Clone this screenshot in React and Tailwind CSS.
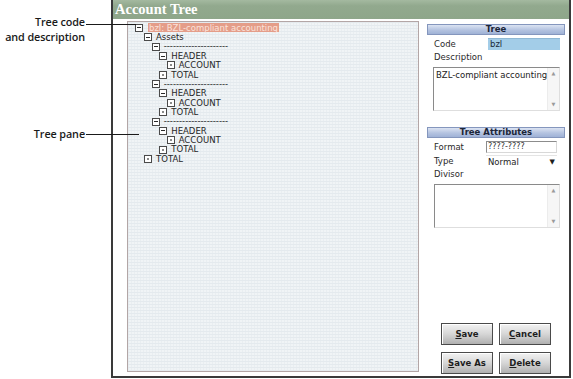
import React from "react";

const rows = [
  { lvl: 0, label: "bzl: BZL-compliant accounting", kind: "minus", hl: true },
  { lvl: 1, label: "Assets", kind: "minus" },
  { lvl: 2, label: "---------------------", kind: "minus" },
  { lvl: 3, label: "HEADER", kind: "minus" },
  { lvl: 4, label: "ACCOUNT", kind: "leaf" },
  { lvl: 3, label: "TOTAL", kind: "leaf" },
  { lvl: 2, label: "---------------------", kind: "minus" },
  { lvl: 3, label: "HEADER", kind: "minus" },
  { lvl: 4, label: "ACCOUNT", kind: "leaf" },
  { lvl: 3, label: "TOTAL", kind: "leaf" },
  { lvl: 2, label: "---------------------", kind: "minus" },
  { lvl: 3, label: "HEADER", kind: "minus" },
  { lvl: 4, label: "ACCOUNT", kind: "leaf" },
  { lvl: 3, label: "TOTAL", kind: "leaf" },
  { lvl: 1, label: "TOTAL", kind: "leaf" },
];

const indent = ["pl-[7px]", "pl-[16px]", "pl-[23.7px]", "pl-[31.3px]", "pl-[38.7px]"];

function Box({ kind }) {
  return (
    <div className="w-[8px] h-[8px] shrink-0 border border-[#4a4a4a] bg-white flex items-center justify-center">
      {kind === "minus" ? (
        <div className="w-[4px] h-[1px] bg-[#2a2a2a]" />
      ) : (
        <div className="w-[2px] h-[2px] bg-[#8a8a8a]" />
      )}
    </div>
  );
}

function Header({ children }) {
  return (
    <div className="h-[11px] border border-[#8496bd] bg-[linear-gradient(180deg,#dbe3f2_0%,#b4c3e0_55%,#9fb2d6_100%)] flex items-center justify-center font-bold text-[8.5px] text-[#1c2638] leading-none">
      {children}
    </div>
  );
}

function ScrollArea({ text, cls }) {
  return (
    <div className={"h-[44px] flex border border-t-[#8a8a8a] border-l-[#8a8a8a] border-r-[#dedede] border-b-[#dedede] bg-white " + cls}>
      <div className="flex-1 min-w-0 pl-[2px] pt-[2px] text-[8.5px] leading-[11px] text-[#222] whitespace-nowrap overflow-hidden">{text}</div>
      <div className="w-[12px] shrink-0 border-l border-[#ececec] bg-[#f6f6f6] flex flex-col items-center justify-between py-[3px] text-[5px] leading-none text-[#9a9a9a]">
        <span>▲</span>
        <span>▼</span>
      </div>
    </div>
  );
}

function Btn({ first, rest }) {
  return (
    <div className="w-[52px] h-[22px] border border-[#4a4a4a] bg-[linear-gradient(180deg,#f2f2f2_0%,#d6d6d6_50%,#b0b0b0_100%)] flex items-center justify-center text-[8.5px] font-bold text-[#1e1e1e] shadow-[inset_1px_1px_0_#ffffff]">
      <span className="underline">{first}</span>
      <span className="whitespace-pre">{rest}</span>
    </div>
  );
}

export default function App() {
  return (
    <div className="w-[573px] h-[379px] bg-white relative flex font-['DejaVu_Sans',sans-serif] overflow-hidden">
      <div className="w-[111px] shrink-0" />
      <div className="w-[460px] h-[378px] border-l-2 border-r-2 border-b-2 border-[#3a3a3a] flex flex-col">
        <div className="h-[19px] bg-[linear-gradient(180deg,#a4b9a0_0%,#92a98e_30%,#8ea68a_100%)] flex items-center pl-[2px] text-white font-['Liberation_Serif',serif] font-bold text-[14.5px] leading-none">
          Account Tree
        </div>
        <div className="flex pt-[2px]">
          <div className="ml-[14px] w-[292px] h-[351px] border border-[#b3a6a6] bg-[#f0f4f6] bg-[image:repeating-linear-gradient(0deg,#e4eaee_0px,#e4eaee_1px,transparent_1px,transparent_3px),repeating-linear-gradient(90deg,#e9eef1_0px,#e9eef1_1px,transparent_1px,transparent_3px)] pt-[1.3px] text-[8.5px] text-[#262626]">
            {rows.map((r, i) => (
              <div key={i} className={"h-[9.36px] flex items-center " + indent[r.lvl]}>
                <Box kind={r.kind} />
                {r.hl ? (
                  <span className="ml-[5px] px-[1px] h-[9px] flex items-center bg-[#e49d89] text-[#fbe2da] leading-none whitespace-nowrap">
                    {r.label}
                  </span>
                ) : (
                  <span className="ml-[4px] leading-none whitespace-nowrap">{r.label}</span>
                )}
              </div>
            ))}
          </div>
          <div className="ml-[8px] w-[138px] flex flex-col text-[8.5px] text-[#2a2a2a]">
            <div className="mt-[3px]">
              <Header>Tree</Header>
            </div>
            <div className="mt-[3px] h-[12px] flex items-center">
              <span className="w-[61px] pl-[7px]">Code</span>
              <div className="w-[72px] h-[12px] bg-[#a3cde8] border-t border-[#8fb8d4] pl-[2px] flex items-center text-[#1a2a3a]">bzl</div>
            </div>
            <div className="h-[10px] mt-[2px] pl-[7px] flex items-center">Description</div>
            <ScrollArea text="BZL-compliant accounting" cls="mt-[5px] ml-[6px] w-[127px]" />
            <div className="mt-[16px]">
              <Header>Tree Attributes</Header>
            </div>
            <div className="mt-[3px] h-[12px] flex items-center">
              <span className="w-[59px] pl-[7px]">Format</span>
              <div className="w-[71px] h-[12px] bg-white border border-t-[#8c8c8c] border-l-[#8c8c8c] border-r-[#d8d8d8] border-b-[#d8d8d8] pl-[1px] flex items-center text-[8px] text-[#333]">????-????</div>
            </div>
            <div className="mt-[2px] h-[13px] flex items-center">
              <span className="w-[59px] pl-[7px]">Type</span>
              <div className="w-[71px] h-[13px] bg-white border-t border-[#e4e4e4] pl-[2px] pr-[2px] flex items-center justify-between text-[#1e1e1e]">
                <span>Normal</span>
                <span className="text-[7px] leading-none">▼</span>
              </div>
            </div>
            <div className="h-[10px] mt-[1px] pl-[7px] flex items-center">Divisor</div>
            <ScrollArea text="" cls="mt-[5px] ml-[7px] w-[126px]" />
            <div className="mt-[95px] ml-[14px] flex gap-[6px]">
              <Btn first="S" rest="ave" />
              <Btn first="C" rest="ancel" />
            </div>
            <div className="mt-[7px] ml-[14px] flex gap-[6px]">
              <Btn first="S" rest="ave As" />
              <Btn first="D" rest="elete" />
            </div>
          </div>
        </div>
      </div>

      <div className="absolute right-[488px] top-[14px] text-right whitespace-nowrap font-['Open_Sans',sans-serif] font-semibold text-[10.8px] tracking-[-0.1px] leading-[15px] text-[#1a1a1a]">
        <div>Tree code</div>
        <div>and description</div>
      </div>
      <div className="absolute left-[86px] top-[24px] w-[50px] h-[1px] bg-[#1a1a1a]" />
      <div className="absolute right-[488px] top-[126px] text-right whitespace-nowrap font-['Open_Sans',sans-serif] font-semibold text-[10.8px] tracking-[-0.1px] leading-[15px] text-[#1a1a1a]">
        Tree pane
      </div>
      <div className="absolute left-[86px] top-[134px] w-[53px] h-[1px] bg-[#1a1a1a]" />
    </div>
  );
}
